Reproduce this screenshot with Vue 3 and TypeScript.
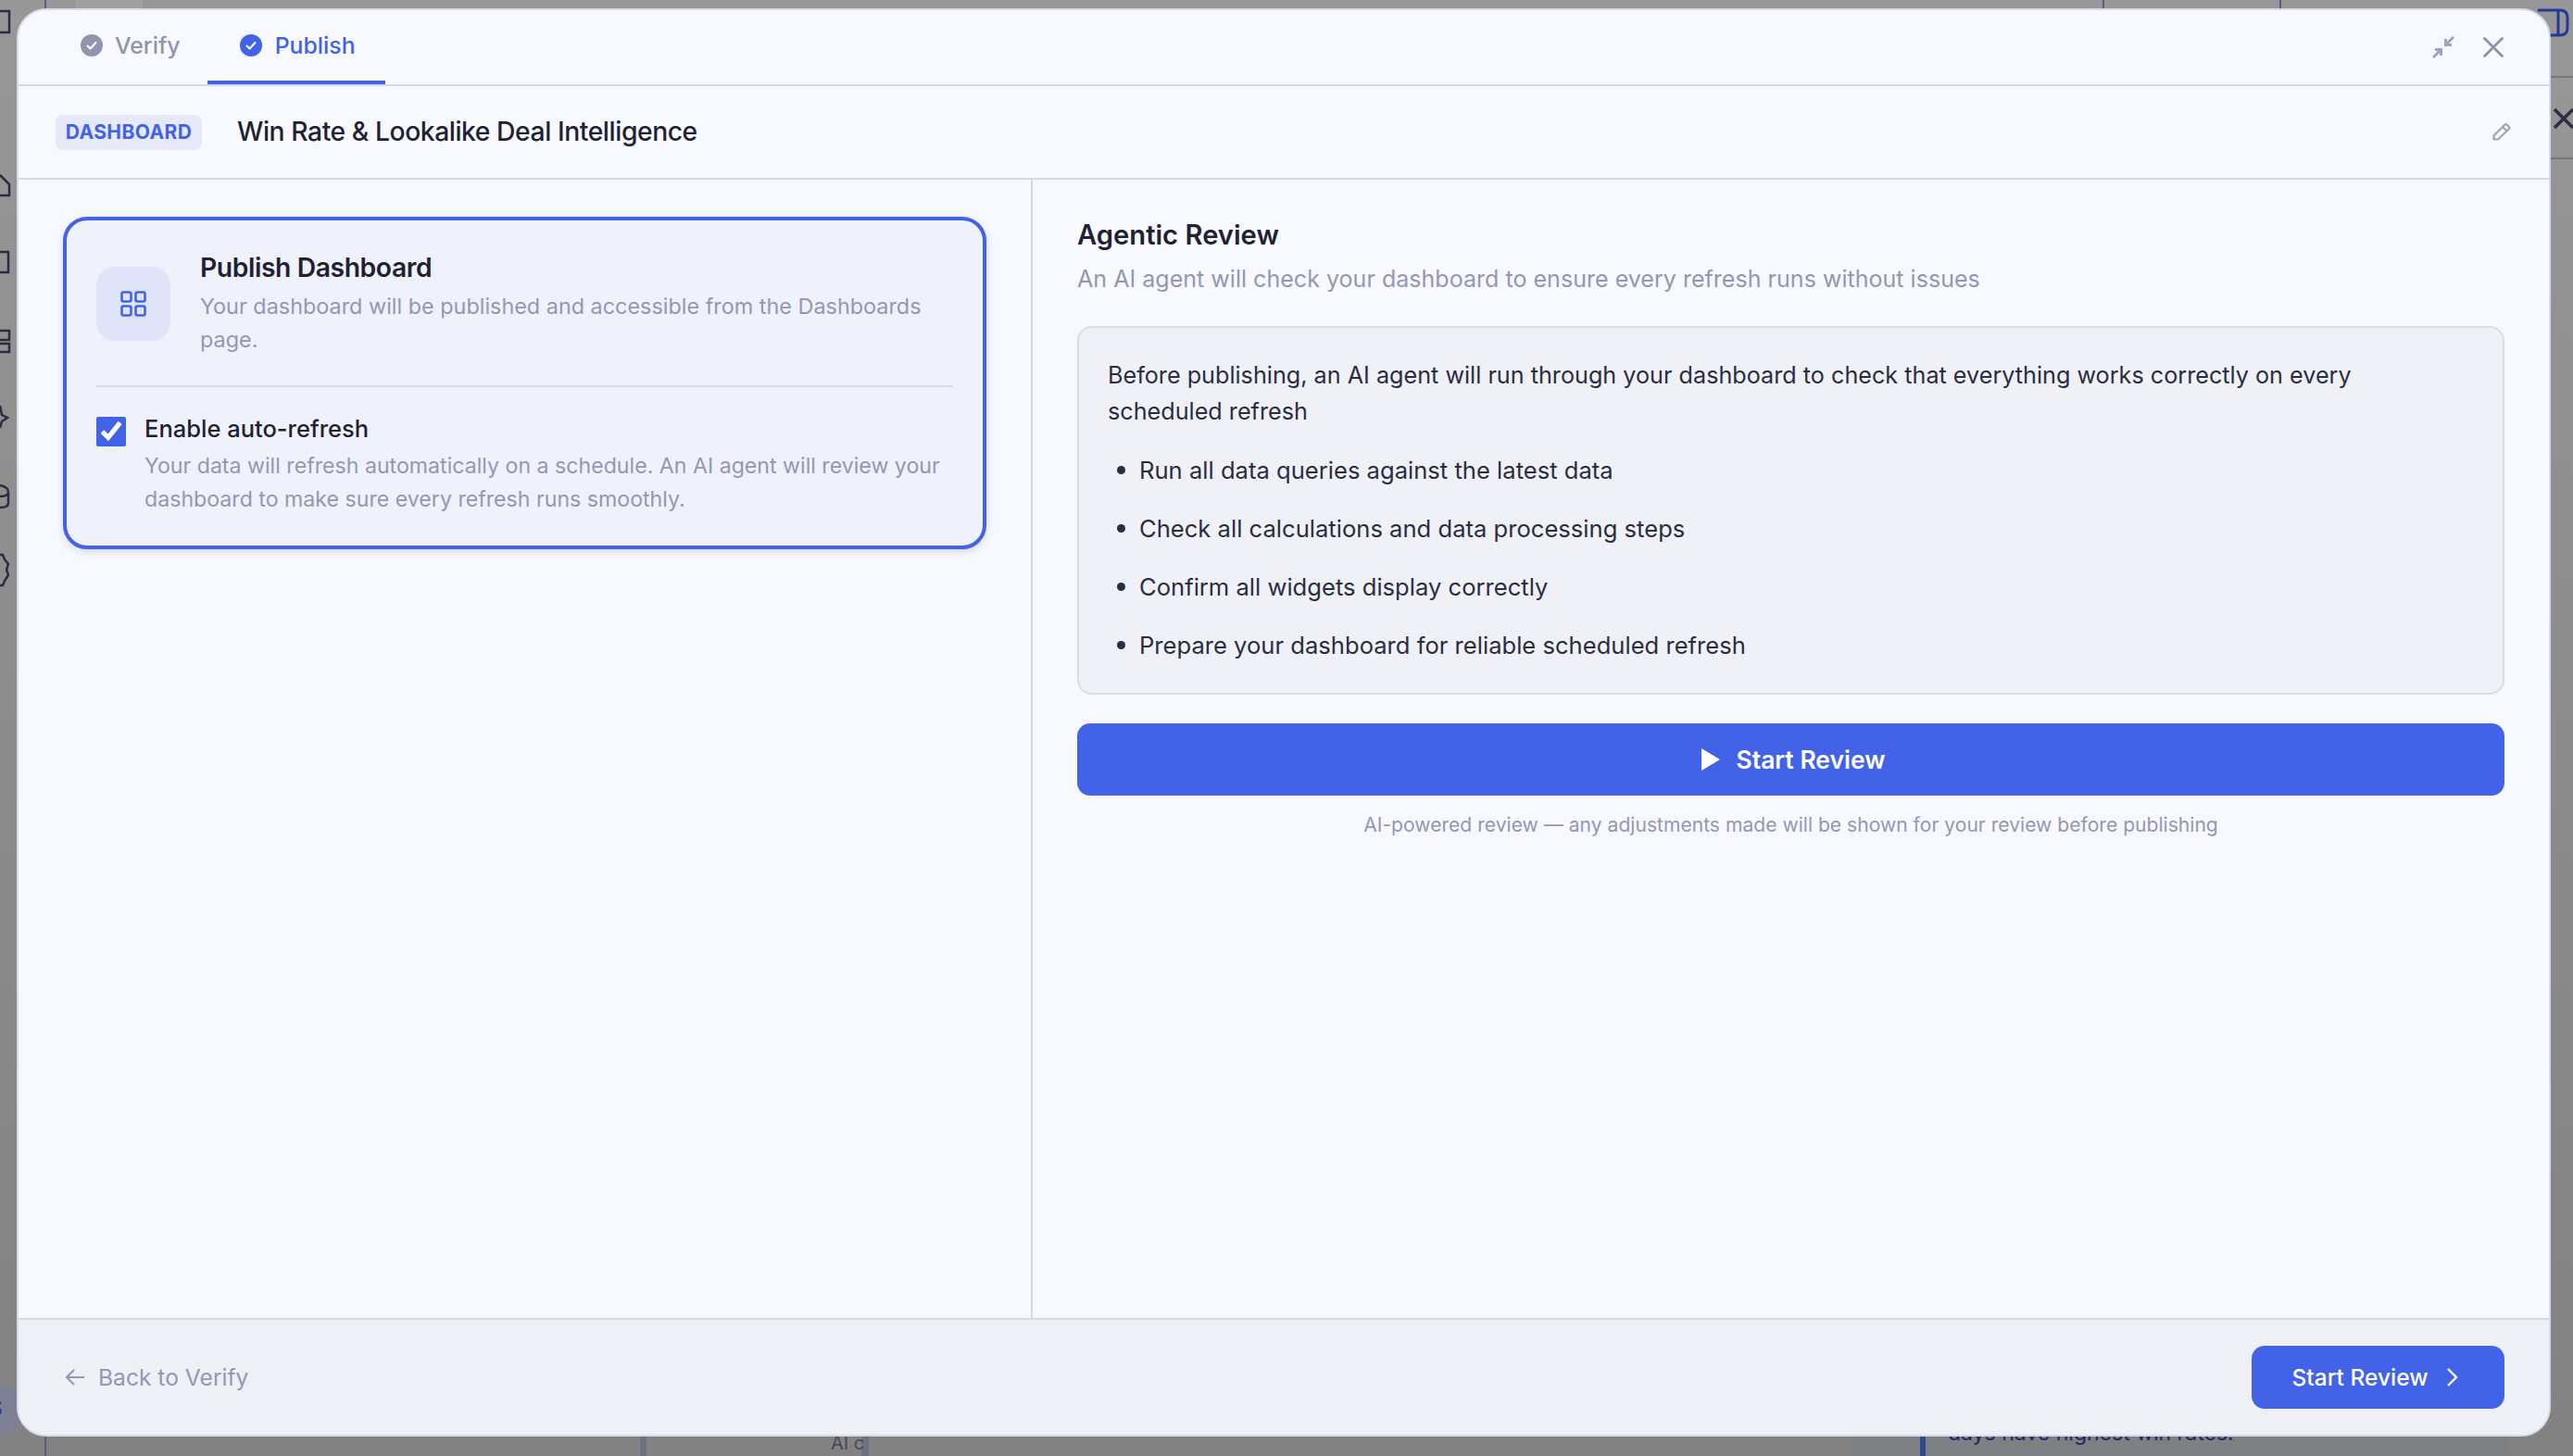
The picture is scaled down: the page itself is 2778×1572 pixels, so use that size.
<script setup lang="ts">
import { ref } from 'vue'

// steps in the top tab bar, both are done at this point
const tabs = [
  { label: 'Verify', active: false },
  { label: 'Publish', active: true },
]

const autoRefresh = ref(true)

const checks = [
  'Run all data queries against the latest data',
  'Check all calculations and data processing steps',
  'Confirm all widgets display correctly',
  'Prepare your dashboard for reliable scheduled refresh',
]
</script>

<template>
  <div class="page">
    <!-- what is left visible of the page behind the modal -->
    <div class="backdrop">
      <div class="scrap-top"></div>
      <div class="scrap-bottom-right"></div>
      <svg class="scrap-lines" width="2778" height="1572" viewBox="0 0 2778 1572" fill="none">
        <path d="M49 0V14M2271 10V0M2462 0V10M49 1550V1572" stroke="#5a5d78" stroke-width="2" />
        <path d="M691 1550h7v22h-7zM930 1550h8v22h-8z" fill="#6e7280" />
        <path d="M2073 1550h6v22h-6z" fill="#2c4a8e" />
        <path d="M2750 83H2778M2750 171H2778" stroke="#777" stroke-width="2" />
        <path d="M2740 11H2764Q2772 11 2772 19V30Q2772 38 2764 38H2740M2762 11V38" stroke="#24389a" stroke-width="3" />
        <path d="M2758 118L2778 138M2778 118L2758 138" stroke="#2e3044" stroke-width="3.5" />
        <g stroke="#2a2c40" stroke-width="2.5">
          <path d="M0 12H10V35H0" />
          <path d="M0 189L10 199V211H0" />
          <path d="M0 272H9V294H0" />
          <path d="M0 357H10V367H0M0 371H10V380H0" />
          <path d="M0 438L2 448L8 451L2 455L0 462" />
          <path d="M0 524Q9 526 9 531V543Q9 548 0 548M0 536Q9 536 9 531" />
          <path d="M0 599H3L5 604L9 609L7 615L9 621L5 627L3 632H0" />
        </g>
        <circle cx="-4" cy="1522" r="28" fill="#7d8094" />
      </svg>
      <span class="scrap-ai">AI c</span>
      <span class="scrap-days">days have highest win rates.</span>
      <span class="scrap-avatar">S</span>
    </div>

    <div class="modal">
      <div class="tabbar">
        <div class="tabs">
          <div v-for="tab in tabs" :key="tab.label" class="tab" :class="{ active: tab.active }">
            <svg class="tab-check" viewBox="0 0 24 24" width="24" height="24">
              <circle cx="12" cy="12" r="12" fill="currentColor" />
              <path d="M7.5 12.5l3 3 6-6.5" fill="none" stroke="#fff" stroke-width="2" stroke-linecap="round" stroke-linejoin="round" />
            </svg>
            {{ tab.label }}
          </div>
        </div>
        <div class="window-btns">
          <svg width="24" height="24" viewBox="0 0 24 24" fill="none" stroke="#a0a3bb" stroke-width="3">
            <path d="M1 23L9.5 14.5M3 14.500H9.500V21M23 1L14.500 9.500M21 9.500H14.500V3" />
          </svg>
          <svg width="24" height="24" viewBox="0 0 24 24" fill="none" stroke="#8f92ab" stroke-width="2.8" stroke-linecap="round">
            <path d="M2.500 2.500L21.500 21.500M21.500 2.500L2.500 21.500" />
          </svg>
        </div>
      </div>

      <div class="title-row">
        <span class="badge">DASHBOARD</span>
        <span class="title">Win Rate &amp; Lookalike Deal Intelligence</span>
        <svg class="edit" width="22" height="22" viewBox="0 0 22 22" fill="none" stroke="#a0a3bb" stroke-width="2.2" stroke-linejoin="round">
          <path d="M2.500 19.500V15.500L14 4Q15.500 2.500 17 4L18.500 5.500Q20 7 18.500 8.500L7 19.500ZM12 6L16.500 10.500" />
        </svg>
      </div>

      <div class="content">
        <div class="left">
          <div class="card">
            <div class="card-top">
              <div class="card-icon">
                <svg width="28" height="28" viewBox="0 0 28 28" fill="none" stroke="#4263e7" stroke-width="2.6">
                  <rect x="1.500" y="1.500" width="10" height="10" rx="2" />
                  <rect x="16.500" y="1.500" width="10" height="10" rx="2" />
                  <rect x="1.500" y="16.500" width="10" height="10" rx="2" />
                  <rect x="16.500" y="16.500" width="10" height="10" rx="2" />
                </svg>
              </div>
              <div>
                <div class="card-title">Publish Dashboard</div>
                <div class="card-desc">Your dashboard will be published and accessible from the Dashboards page.</div>
              </div>
            </div>
            <div class="card-line"></div>
            <label class="refresh">
              <input v-model="autoRefresh" type="checkbox" class="refresh-box" />
              <span>
                <span class="refresh-label">Enable auto-refresh</span>
                <span class="card-desc refresh-desc">Your data will refresh automatically on a schedule. An AI agent will review your dashboard to make sure every refresh runs smoothly.</span>
              </span>
            </label>
          </div>
        </div>

        <div class="right">
          <h2 class="review-title">Agentic Review</h2>
          <p class="review-sub">An AI agent will check your dashboard to ensure every refresh runs without issues</p>
          <div class="review-box">
            <p>Before publishing, an AI agent will run through your dashboard to check that everything works correctly on every scheduled refresh</p>
            <ul>
              <li v-for="item in checks" :key="item">{{ item }}</li>
            </ul>
          </div>
          <button class="start-big">
            <svg width="20" height="24" viewBox="0 0 20 24"><path d="M0 0L20 12L0 24Z" fill="#fff" /></svg>
            Start Review
          </button>
          <p class="note">AI-powered review — any adjustments made will be shown for your review before publishing</p>
        </div>
      </div>

      <div class="footer">
        <div class="back">
          <svg width="22" height="20" viewBox="0 0 22 20" fill="none" stroke="#9497b3" stroke-width="2.2">
            <path d="M21 10H2M10 2L2 10L10 18" />
          </svg>
          Back to Verify
        </div>
        <button class="start-small">
          Start Review
          <svg width="13" height="22" viewBox="0 0 13 22" fill="none" stroke="#fff" stroke-width="2.4"><path d="M2 2L11 11L2 20" /></svg>
        </button>
      </div>
    </div>
  </div>
</template>

<style scoped>
.page {
  position: relative;
  width: 2778px;
  height: 1572px;
  box-sizing: border-box;
  padding: 9px 24px 21px 18px;
  display: flex;
  overflow: hidden;
  background: linear-gradient(180deg, #979797 0%, #8e8e8e 40%, #828282 100%);
  font-family: Inter, "Liberation Sans", sans-serif;
  color: #1f2233;
}

.backdrop {
  position: absolute;
  inset: 0;
}

.scrap-top {
  position: absolute;
  left: 82px;
  top: 0;
  width: 72px;
  height: 14px;
  background: #a0a0a0;
}

.scrap-bottom-right {
  position: absolute;
  left: 2000px;
  top: 1550px;
  width: 710px;
  height: 22px;
  background: #7e8084;
}

.scrap-lines {
  position: absolute;
  left: 0;
  top: 0;
}

.scrap-ai {
  position: absolute;
  left: 897px;
  top: 1546px;
  font-size: 20px;
  color: #45485a;
}

.scrap-days {
  position: absolute;
  left: 2103px;
  top: 1533px;
  font-size: 23px;
  color: #1e2660;
}

.scrap-avatar {
  position: absolute;
  left: -13px;
  top: 1506px;
  font-size: 24px;
  font-weight: 600;
  color: #24389a;
}

.modal {
  position: relative;
  flex: 1;
  display: flex;
  flex-direction: column;
  box-sizing: border-box;
  border: 2px solid #d6daea;
  border-radius: 32px;
  background: #f8f9fe;
  overflow: hidden;
}

.tabbar {
  height: 82px;
  flex: none;
  box-sizing: border-box;
  display: flex;
  justify-content: space-between;
  border-bottom: 2px solid #d5d9ea;
  padding: 0 48px 0 32px;
}

.tabs {
  display: flex;
  gap: 29px;
}

.tab {
  display: flex;
  align-items: center;
  gap: 13px;
  height: 80px;
  padding: 0 0 4px 35px;
  box-sizing: border-box;
  font-size: 24.800px;
  font-weight: 500;
  color: #9194af;
}

.tab.active {
  gap: 14px;
  color: #4263e7;
  box-shadow: inset 0 -4px 0 #4263e7;
  padding: 0 32px 4px 35px;
}

.tab-check {
  flex: none;
}

.window-btns {
  display: flex;
  align-items: center;
  gap: 30px;
}

.title-row {
  height: 101px;
  flex: none;
  box-sizing: border-box;
  display: flex;
  align-items: center;
  border-bottom: 2px solid #d5d9ea;
  padding: 0 40px 0 40px;
}

.badge {
  width: 158px;
  height: 38px;
  line-height: 38px;
  text-align: center;
  border-radius: 8px;
  background: #e6e9f9;
  color: #4263e7;
  font-size: 21px;
  font-weight: 700;
  letter-spacing: 0.4px;
}

.title {
  margin-left: 38px;
  flex: 1;
  font-size: 28.300px;
  font-weight: 500;
  letter-spacing: -0.45px;
  margin-top: -2px;
}

.edit {
  margin-top: -2px;
}

.content {
  flex: 1;
  display: grid;
  grid-template-columns: 1095px 1fr;
  min-height: 0;
}

.left {
  border-right: 2px solid #d5d9ea;
  padding: 40px 48px 0 48px;
}

.card {
  border: 4px solid #4263e7;
  border-radius: 26px;
  background: #eff2fb;
  padding: 33px 32px 32px;
  box-shadow: 0 3px 8px rgba(66, 72, 120, 0.18);
}

.card-top {
  display: flex;
  align-items: center;
  gap: 32px;
}

.card-icon {
  flex: none;
  width: 80px;
  height: 80px;
  border-radius: 20px;
  background: #dfe4f8;
  display: flex;
  align-items: center;
  justify-content: center;
}

.card-title {
  font-size: 28.300px;
  line-height: 36px;
  font-weight: 600;
  letter-spacing: -0.42px;
  margin-bottom: 6px;
}

.card-desc {
  font-size: 23.400px;
  line-height: 36px;
  color: #9497b3;
}

.card-line {
  height: 2px;
  background: #d6d9e8;
  margin: 31px 0 27px;
}

.refresh {
  display: flex;
  gap: 20px;
}

.refresh-box {
  flex: none;
  width: 32px;
  height: 32px;
  margin: 5px 0 0;
  accent-color: #4263e7;
}

.refresh-label {
  display: block;
  font-size: 25.500px;
  line-height: 36px;
  font-weight: 500;
  margin-bottom: 4px;
}

.refresh-desc {
  display: block;
  font-size: 23.150px;
}

.right {
  padding: 39px 48px 0;
}

.review-title {
  margin: 0;
  font-size: 29.200px;
  line-height: 42px;
  font-weight: 600;
}

.review-sub {
  margin: 7px 0 0;
  font-size: 25.070px;
  line-height: 38px;
  color: #9497b3;
}

.review-box {
  margin-top: 32px;
  border: 2px solid #d8dbeb;
  border-radius: 16px;
  background: #f0f1f6;
  padding: 32px 60px 32px 31px;
  font-size: 25.200px;
  line-height: 39px;
  color: #2a2d42;
}

.review-box p {
  margin: 0;
}

.review-box ul {
  margin: 23px 0 0;
  padding: 0;
  list-style: none;
}

.review-box li {
  position: relative;
  padding-left: 34px;
  margin-top: 24px;
  font-size: 25.600px;
}

.review-box li::before {
  content: "";
  position: absolute;
  left: 10px;
  top: 15px;
  width: 9px;
  height: 9px;
  border-radius: 50%;
  background: #2a2d42;
}

.start-big {
  width: 100%;
  height: 78px;
  margin-top: 31px;
  padding: 0 0 0 6px;
  border: none;
  border-radius: 14px;
  background: #4263e7;
  color: #fff;
  font-family: inherit;
  font-size: 26.500px;
  font-weight: 600;
  display: flex;
  align-items: center;
  justify-content: center;
  gap: 17px;
}

.note {
  margin: 17px 0 0;
  text-align: center;
  font-size: 21.100px;
  line-height: 30px;
  color: #9497b3;
}

.footer {
  height: 126px;
  flex: none;
  box-sizing: border-box;
  border-top: 2px solid #d5d9ea;
  background: #eff0f6;
  display: flex;
  align-items: center;
  justify-content: space-between;
  padding: 0 48px 0 50px;
}

.back {
  display: flex;
  align-items: center;
  gap: 14px;
  font-size: 24.600px;
  color: #9497b3;
}

.start-small {
  width: 273px;
  height: 68px;
  padding: 0 6px 0 0;
  border: none;
  border-radius: 14px;
  background: #4263e7;
  color: #fff;
  font-family: inherit;
  font-size: 24.500px;
  font-weight: 500;
  display: flex;
  align-items: center;
  justify-content: center;
  gap: 20px;
}
</style>
